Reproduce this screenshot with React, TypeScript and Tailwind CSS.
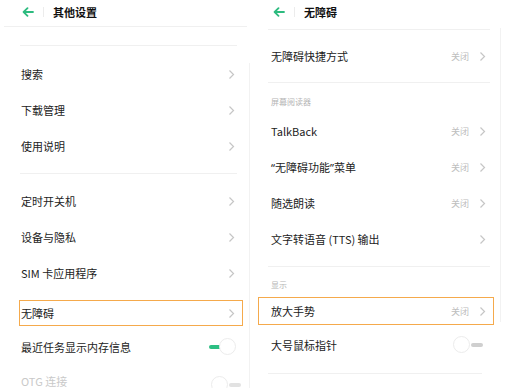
const font = { fontFamily: '"Noto Sans CJK SC", "Noto Sans", sans-serif' };
const latin = { fontFamily: '"Noto Sans", sans-serif' };

const Chevron = () => (
  <svg width="7" height="11" viewBox="0 0 7 11" className="shrink-0">
    <path d="M1.5 1.5L5.5 5.5L1.5 9.5" fill="none" stroke="#c6c6c6" strokeWidth="1.2" />
  </svg>
);

const BackArrow = () => (
  <svg width="12" height="10" viewBox="0 0 12 10">
    <path d="M11 5H2M5.5 1.2L1.6 5L5.5 8.8" fill="none" stroke="#2dbb7f" strokeWidth="1.8" strokeLinecap="round" strokeLinejoin="round" />
  </svg>
);

const Header = ({ title }: { title: string }) => (
  <div className="shrink-0 flex items-center h-[24px] pl-[22px]">
    <BackArrow />
    <div className="w-px h-[10px] bg-[#ececec] ml-[9px]" />
    <span className="ml-[9px] text-[11px] font-bold text-[#111] leading-none">{title}</span>
  </div>
);

type RowProps = {
  label: React.ReactNode;
  value?: string;
  chevron?: boolean;
};

const Row = ({ label, value, chevron = true }: RowProps) => (
  <div className="flex items-center h-[36px]">
    <span className="text-[11px] leading-none text-[#222]">{label}</span>
    <div className="ml-auto flex items-center">
      {value && <span className="text-[9px] text-[#bdbdbd] mr-[10px] leading-none">{value}</span>}
      {chevron && <Chevron />}
    </div>
  </div>
);

const ToggleOn = () => (
  <div className="relative w-[28px] h-[18px]">
    <div className="absolute left-0 top-[7px] w-[13px] h-[4px] rounded-full bg-[#2dbf83]" />
    <div className="absolute left-[10px] top-0 w-[17px] h-[17px] rounded-full bg-white border border-[#ececec]" />
  </div>
);

const ToggleOff = ({ dim }: { dim?: boolean }) => (
  <div className="relative w-[30px] h-[18px]">
    <div className={`absolute right-0 top-[7px] w-[12px] h-[4px] rounded-full ${dim ? "bg-[#e2e2e2]" : "bg-[#cfcfcf]"}`} />
    <div className="absolute left-0 top-0 w-[17px] h-[17px] rounded-full bg-white border border-[#ececec]" />
  </div>
);

const Sep = ({ cls }: { cls: string }) => <div className={`shrink-0 h-px bg-[#f0f0f0] ${cls}`} />;

export default function App() {
  return (
    <div className="w-[506px] h-[388px] overflow-hidden bg-white flex" style={font}>
      {/* 左侧：其他设置 */}
      <div className="w-[251px] shrink-0 flex flex-col">
        <Header title="其他设置" />
        <Sep cls="mx-[4px] mt-[2px]" />
        <div className="flex flex-1 shrink-0">
          <div className="flex-1 flex flex-col">
            <Sep cls="ml-[20px] mr-[12px] mt-[18px]" />
            <div className="shrink-0 pl-[21px] pr-[14px] mt-[10px]">
              <Row label="搜索" />
              <Row label="下载管理" />
              <Row label="使用说明" />
            </div>
            <Sep cls="ml-[20px] mr-[12px] mt-[9px]" />
            <div className="shrink-0 pl-[21px] pr-[14px] mt-[9px]">
              <Row label="定时开关机" />
              <Row label="设备与隐私" />
              <Row label="SIM 卡应用程序" />
            </div>
            <div className="shrink-0 ml-[19px] mr-[6px] mt-[9px] h-[26px] border-[1.5px] border-[#f5aa4c] flex items-center pl-[1px] pr-[7px]">
              <span className="text-[11px] leading-none text-[#222]">无障碍</span>
              <div className="ml-auto"><Chevron /></div>
            </div>
            <div className="shrink-0 pl-[21px] pr-[12px] mt-[3px]">
              <div className="flex items-center h-[36px]">
                <span className="text-[11px] leading-none text-[#222]">最近任务显示内存信息</span>
                <div className="ml-auto"><ToggleOn /></div>
              </div>
              <div className="flex items-center h-[32px]">
                <span className="text-[11px] leading-none text-[#c9c9c9]">OTG 连接</span>
                <div className="ml-auto mr-[-4px] mt-[8px]"><ToggleOff dim /></div>
              </div>
            </div>
          </div>
          <div className="w-px bg-[#f2f2f2] mt-[36px] mr-[1px]" />
        </div>
      </div>

      {/* 右侧：无障碍 */}
      <div className="flex-1 flex flex-col">
        <Header title="无障碍" />
        <div className="flex flex-1 shrink-0">
          <div className="flex-1 flex flex-col">
            <Sep cls="ml-[17px] mr-[10px] mt-[5px]" />
            <div className="shrink-0 pl-[20px] pr-[14px] mt-[8px]">
              <Row label="无障碍快捷方式" value="关闭" />
            </div>
            <Sep cls="ml-[17px] mr-[10px] mt-[8px]" />
            <div className="shrink-0 pl-[20px] mt-[15px] text-[8px] leading-none text-[#b5b5b5]">屏幕阅读器</div>
            <div className="shrink-0 pl-[20px] pr-[14px] mt-[7px]">
              <Row label="TalkBack" value="关闭" />
              <Row
                label={
                  <>
                    <span style={latin}>“</span>无障碍功能<span style={latin}>”</span>菜单
                  </>
                }
                value="关闭"
              />
              <Row label="随选朗读" value="关闭" />
              <Row label="文字转语音 (TTS) 输出" />
            </div>
            <Sep cls="ml-[17px] mr-[10px] mt-[9px]" />
            <div className="shrink-0 pl-[20px] mt-[14px] text-[8px] leading-none text-[#b5b5b5]">显示</div>
            <div className="shrink-0 ml-[7px] mr-[6px] mt-[8px] h-[28px] border-[1.5px] border-[#f5aa4c] flex items-center pl-[12px] pr-[7px]">
              <span className="text-[11px] leading-none text-[#222]">放大手势</span>
              <div className="ml-auto flex items-center">
                <span className="text-[9px] text-[#bdbdbd] mr-[10px] leading-none">关闭</span>
                <Chevron />
              </div>
            </div>
            <div className="shrink-0 pl-[20px] pr-[17px] mt-[2px]">
              <div className="flex items-center h-[36px]">
                <span className="text-[11px] leading-none text-[#222]">大号鼠标指针</span>
                <div className="ml-auto"><ToggleOff /></div>
              </div>
            </div>
            <Sep cls="ml-[17px] mr-[18px] mt-[10px]" />
          </div>
          <div className="w-px bg-[#f2f2f2] mt-[4px] mb-[66px] mr-[5px]" />
        </div>
      </div>
    </div>
  );
}
